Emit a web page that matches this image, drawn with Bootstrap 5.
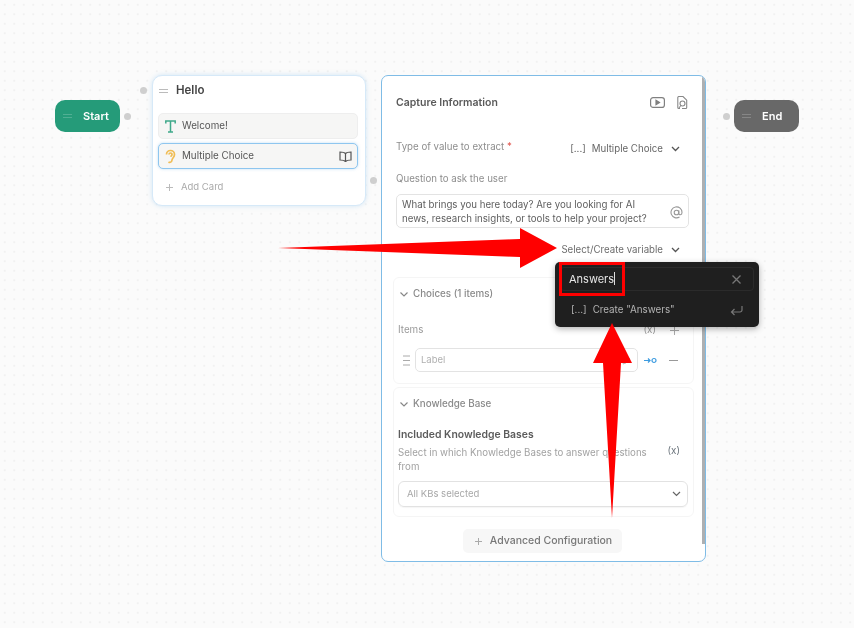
<!DOCTYPE html>
<html lang="en">
<head>
<meta charset="utf-8">
<title>Flow editor</title>
<link href="https://cdn.jsdelivr.net/npm/bootstrap@5.3.0/dist/css/bootstrap.min.css" rel="stylesheet">
<style>
html,body{margin:0;height:100%;overflow:hidden;background:#fbfbfb}
body{font-family:Inter,"Liberation Sans",sans-serif;font-size:9.8px;color:#555}
.flow-canvas{position:relative;width:854px;height:628px;overflow:hidden;filter:blur(.55px);
 background-color:#fbfbfb;background-image:radial-gradient(circle,#f1f1f1 1px,transparent 1.3px);background-size:9.5px 9.5px}
.node-event{position:absolute;top:100px;width:65px;height:32px;border-radius:10px;color:#fff;font-weight:600;font-size:11px}
.node-start{left:55px;background:#259b79}
.node-end{left:734px;background:#686868}
.drag-grip{width:9px;height:4px;border-top:1px solid rgba(255,255,255,.2);border-bottom:1px solid rgba(255,255,255,.2)}
.event-label{margin-left:11px}
.drag-grip-dark{width:9px;height:4px;border-top:1px solid #bbb;border-bottom:1px solid #bbb}
.port{position:absolute;width:7px;height:7px;border-radius:50%;background:#cfcfcf}
.node-hello{position:absolute;left:152px;top:75px;width:214px;height:131px;background:#fff;border:1px solid #d6e9f8;border-radius:10px;box-shadow:0 0 5px rgba(130,190,235,.35);padding:0 7px 0 5px}
.hello-title{height:30px;padding-left:1px;font-size:11.5px;font-weight:600;color:#444;margin-bottom:7px}
.hello-item{height:26px;background:#f6f6f5;border:1px solid #eeeeee;border-radius:5px;font-size:9.8px;color:#565656;padding:0 5px 0 6px;margin-bottom:4px;gap:6px}
.hello-item-active{border:1.5px solid #8ec6ef;box-shadow:0 0 3px rgba(130,190,235,.5)}
.add-card{height:28px;padding:0 8px;color:#aaa;font-size:9.5px;margin-top:2px}
.node-capture{position:absolute;left:381px;top:75px;width:325px;height:487px;background:#fff;border:1.5px solid #7fbce6;border-radius:7px;overflow:hidden;padding:0 10px 0 5px}
.panel-scroll{position:absolute;right:0;top:0;width:3px;height:468px;background:#aeb0b2}
.capture-head{height:53px;padding:0 7px 0 9px;font-size:10.5px;font-weight:600;color:#5a5a5a}
.field-row{height:24px;padding:0 9px;color:#8e8e8e;font-size:9.7px;white-space:nowrap}
.type-row{margin-top:6px}
.question-row{margin-top:8px}
.val-text{color:#666;font-size:9.7px;margin-top:4px}
.val-bracket{margin-right:6px}
.val-chevron{margin-top:4px;margin-right:6px}
.req{color:#e0554d}
.question-box{margin:3px 6px 0 9px;height:34px;border:1px solid #e3e3e3;border-radius:5px;padding:4px 5px 2px;font-size:9.7px;line-height:14px;color:#5e5e5e;background:#fff}
.var-row{height:26px;margin-top:9px;padding-right:15px;font-size:9.7px;color:#6c6c6c}
.group-box{border:1px solid #f5f5f5;border-radius:6px;margin:0 1px 0 6px;padding:0 5px 0 4px}
.group-choices{height:107px;margin-top:14px}
.group-kb{height:130px;margin-top:3px}
.group-head{height:33px;font-size:9.8px;font-weight:500;color:#8a8a8a;padding-left:2px;gap:5px}
.items-row{height:26px;margin-top:6px;color:#9a9a9a;padding-right:9px}
.items-x{margin-right:14px}
.choice-row{margin-top:5px}
.choice-grip{margin-left:5px;margin-right:5px}
.label-input{width:223px;height:24px;border:1px solid #e3e3e3;border-radius:5px;padding:0 6px 0 5px;color:#b0b0b0;font-size:9.5px}
.flow-link{margin-left:6px}
.choice-minus{margin-left:12px}
.kb-title{font-size:10.4px;font-weight:600;color:#5c5c5c;margin-top:7px;line-height:14px}
.kb-desc{font-size:9.7px;line-height:14px;color:#a2a2a2;margin-top:4px;width:262px}
.kb-x{margin-top:2px;margin-right:8px}
.kb-select{height:26px;border:1px solid #e2e2e2;border-radius:6px;margin-top:7px;padding:0 6px 0 8px;color:#a8a8a8;font-size:9.5px;box-shadow:0 1px 1px rgba(0,0,0,.04)}
.adv-btn{width:159px;height:24px;margin:12px auto 0;position:relative;left:1px;padding-left:3px;background:#f7f7f7;border-radius:5px;font-size:10.5px;color:#777;font-weight:500}
.var-menu{position:absolute;left:555px;top:262px;width:204px;height:65px;background:#1f1f1f;border-radius:5px;box-shadow:0 2px 6px rgba(0,0,0,.3);padding:5px;color:#ddd}
.menu-search{height:24px;border:1px solid #2b2b2b;border-radius:4px;padding:0 8px;font-size:11px;color:#e6e6e6}
.menu-caret{display:inline-block;width:1px;height:13px;background:#ddd;vertical-align:-2px}
.menu-item{height:38px;padding:0 11px;font-size:9.8px;color:#b4b4b4}
.menu-bracket{margin-right:6px}
.mark-box{position:absolute;left:559px;top:262px;width:66px;height:34px;border:3px solid #f00}
.arrow-layer{position:absolute;left:0;top:0;pointer-events:none}
.ico{flex:none;display:block}
</style>
</head>
<body>
<div class="flow-canvas">
  <span class="port" style="left:140px;top:87px"></span>
  <span class="port" style="left:124px;top:113px"></span>
  <span class="port" style="left:370px;top:177px"></span>
  <span class="port" style="left:723px;top:113px"></span>

  <div class="node-event node-start d-flex align-items-center"><span class="drag-grip ms-2"></span><span class="event-label">Start</span></div>
  <div class="node-event node-end d-flex align-items-center"><span class="drag-grip ms-2"></span><span class="event-label">End</span></div>

  <div class="node-hello">
    <div class="hello-title d-flex align-items-center gap-2"><span class="drag-grip-dark"></span>Hello</div>
    <div class="hello-item d-flex align-items-center">
      <svg class="ico" width="11" height="13" viewBox="0 0 11 13" fill="none" stroke="#3fa98a" stroke-width="1.5"><path d="M.8 3.500V1h9.400v2.500M5.500 1v11M3 12h5"/></svg>Welcome!
    </div>
    <div class="hello-item hello-item-active d-flex align-items-center">
      <svg class="ico" width="11" height="15" viewBox="0 0 11 15" fill="none" stroke="#f0bd55" stroke-width="1.700"><path d="M1.500 5.500a4 4 0 0 1 8 0c0 3-2.300 3.200-2.500 5.500-.2 2-2 3-3.500 2"/><path d="M4 5.500a1.500 1.500 0 0 1 3 0c0 1-1 1.300-1.300 2.300"/></svg>
      <span class="flex-grow-1">Multiple Choice</span>
      <svg class="ico" width="13" height="11" viewBox="0 0 13 11" fill="none" stroke="#555" stroke-width="1.200"><path d="M6.500 2.500C5.500 1.300 3.500 1 1 1v8c2.500 0 4.500.3 5.500 1.500C7.500 9.300 9.500 9 12 9V1C9.500 1 7.500 1.300 6.500 2.500zM6.500 2.500v8"/></svg>
    </div>
    <div class="add-card d-flex align-items-center gap-2">
      <svg class="ico" width="7" height="7" viewBox="0 0 7 7" stroke="#bbb" fill="none"><path d="M3.500 0v7M0 3.500h7"/></svg>Add Card
    </div>
  </div>

  <div class="node-capture">
    <div class="capture-head d-flex align-items-center">
      <span class="flex-grow-1">Capture Information</span>
      <svg class="ico me-2" width="15" height="11" viewBox="0 0 15 11" fill="none" stroke="#808080" stroke-width="1.200"><rect x=".6" y=".6" width="13.800" height="9.800" rx="2.500"/><path d="M6 3.300l3.500 2.200L6 7.700z" fill="#808080"/></svg>
      <svg class="ico ms-1" width="11" height="14" viewBox="0 0 11 14" fill="none" stroke="#888" stroke-width="1.100"><path d="M3 12.500H1.800a1 1 0 0 1-1-1v-10a1 1 0 0 1 1-1h4.200l3.700 3.700v7.300a1 1 0 0 1-1 1H5"/><circle cx="5.500" cy="7.500" r="2.500"/><path d="M3.800 9.500L2 12"/></svg>
    </div>
    <div class="field-row type-row d-flex align-items-center">
      <span class="flex-grow-1">Type of value to extract <span class="req">*</span></span>
      <span class="val-text me-2"><span class="val-bracket">[...]</span>Multiple Choice</span>
      <svg class="ico val-chevron" width="9" height="6" viewBox="0 0 9 6" fill="none" stroke="#555" stroke-width="1.300"><path d="M1 1l3.500 3.500L8 1"/></svg>
    </div>
    <div class="field-row question-row d-flex align-items-center">Question to ask the user</div>
    <div class="question-box d-flex align-items-center">
      <span class="flex-grow-1">What brings you here today? Are you looking for AI<br>news, research insights, or tools to help your project?</span>
      <svg class="ico" width="13" height="13" viewBox="0 0 13 13" fill="none" stroke="#999" stroke-width="1.100"><circle cx="6.500" cy="6.500" r="2.300"/><path d="M8.800 4.200v3.300c0 1.800 3.200 1.800 3.200-1A5.500 5.500 0 1 0 9.500 11"/></svg>
    </div>
    <div class="var-row d-flex align-items-center justify-content-end gap-2">
      <span>Select/Create variable</span>
      <svg class="ico" width="9" height="6" viewBox="0 0 9 6" fill="none" stroke="#555" stroke-width="1.300"><path d="M1 1l3.500 3.500L8 1"/></svg>
    </div>

    <div class="group-box group-choices">
      <div class="group-head d-flex align-items-center">
        <svg class="ico" width="8" height="5" viewBox="0 0 8 5" fill="none" stroke="#888" stroke-width="1.200"><path d="M.5.500L4 4 7.500.5"/></svg>
        Choices (1 items)
      </div>
      <div class="items-row d-flex align-items-center">
        <span class="flex-grow-1">Items</span>
        <span class="items-x">(x)</span>
        <svg class="ico" width="9" height="9" viewBox="0 0 9 9" stroke="#aaa" fill="none"><path d="M4.500 0v9M0 4.500h9"/></svg>
      </div>
      <div class="choice-row d-flex align-items-center">
        <svg class="ico choice-grip" width="7" height="11" viewBox="0 0 7 11" stroke="#aaa" fill="none"><path d="M0 1h7M0 5.500h7M0 10h7"/></svg>
        <div class="label-input d-flex align-items-center justify-content-between">Label
          <svg class="ico" width="9" height="9" viewBox="0 0 9 9" fill="none" stroke="#bbb"><path d="M1 8l1-3 4-4 2 2-4 4z"/></svg>
        </div>
        <svg class="ico flow-link" width="13" height="7" viewBox="0 0 13 7" fill="none" stroke="#3c9be0" stroke-width="1.200"><path d="M0 3.500h6M4 1.500l2 2-2 2"/><circle cx="10" cy="3.500" r="2"/></svg>
        <svg class="ico choice-minus" width="9" height="1" viewBox="0 0 9 1" stroke="#999"><path d="M0 .5h9"/></svg>
      </div>
    </div>

    <div class="group-box group-kb">
      <div class="group-head d-flex align-items-center">
        <svg class="ico" width="8" height="5" viewBox="0 0 8 5" fill="none" stroke="#888" stroke-width="1.200"><path d="M.5.500L4 4 7.500.5"/></svg>
        Knowledge Base
      </div>
      <div class="kb-title">Included Knowledge Bases</div>
      <div class="d-flex">
        <div class="kb-desc">Select in which Knowledge Bases to answer questions from</div>
        <span class="ms-auto kb-x text-secondary">(x)</span>
      </div>
      <div class="kb-select d-flex align-items-center justify-content-between">All KBs selected
        <svg class="ico" width="9" height="6" viewBox="0 0 9 6" fill="none" stroke="#666" stroke-width="1.200"><path d="M1 1l3.500 3.500L8 1"/></svg>
      </div>
    </div>

    <div class="adv-btn d-flex align-items-center justify-content-center gap-2">
      <svg class="ico" width="7" height="7" viewBox="0 0 7 7" stroke="#aaa" fill="none"><path d="M3.500 0v7M0 3.500h7"/></svg>Advanced Configuration
    </div>
    <div class="panel-scroll"></div>
  </div>

  <div class="var-menu">
    <div class="menu-search d-flex align-items-center justify-content-between">
      <span>Answers<span class="menu-caret"></span></span>
      <svg class="ico me-1" width="9" height="9" viewBox="0 0 9 9" stroke="#777" stroke-width="1.300" fill="none"><path d="M.5.500l8 8M8.500.5l-8 8"/></svg>
    </div>
    <div class="menu-item d-flex align-items-center">
      <span class="menu-bracket">[...]</span><span class="flex-grow-1">Create "Answers"</span>
      <svg class="ico" width="13" height="11" viewBox="0 0 13 11" fill="none" stroke="#777" stroke-width="1.200"><path d="M12 1v4a2 2 0 0 1-2 2H1.500M4.500 4l-3 3 3 3"/></svg>
    </div>
  </div>
  <div class="mark-box"></div>

  <svg class="arrow-layer" width="854" height="628" viewBox="0 0 854 628">
    <path d="M278 248L520 239V228L557 248L520 268V257Z" fill="#f00"/>
    <path d="M612 518L603 363H593L612 323L632 363H621Z" fill="#f00"/>
  </svg>
</div>
</body>
</html>
